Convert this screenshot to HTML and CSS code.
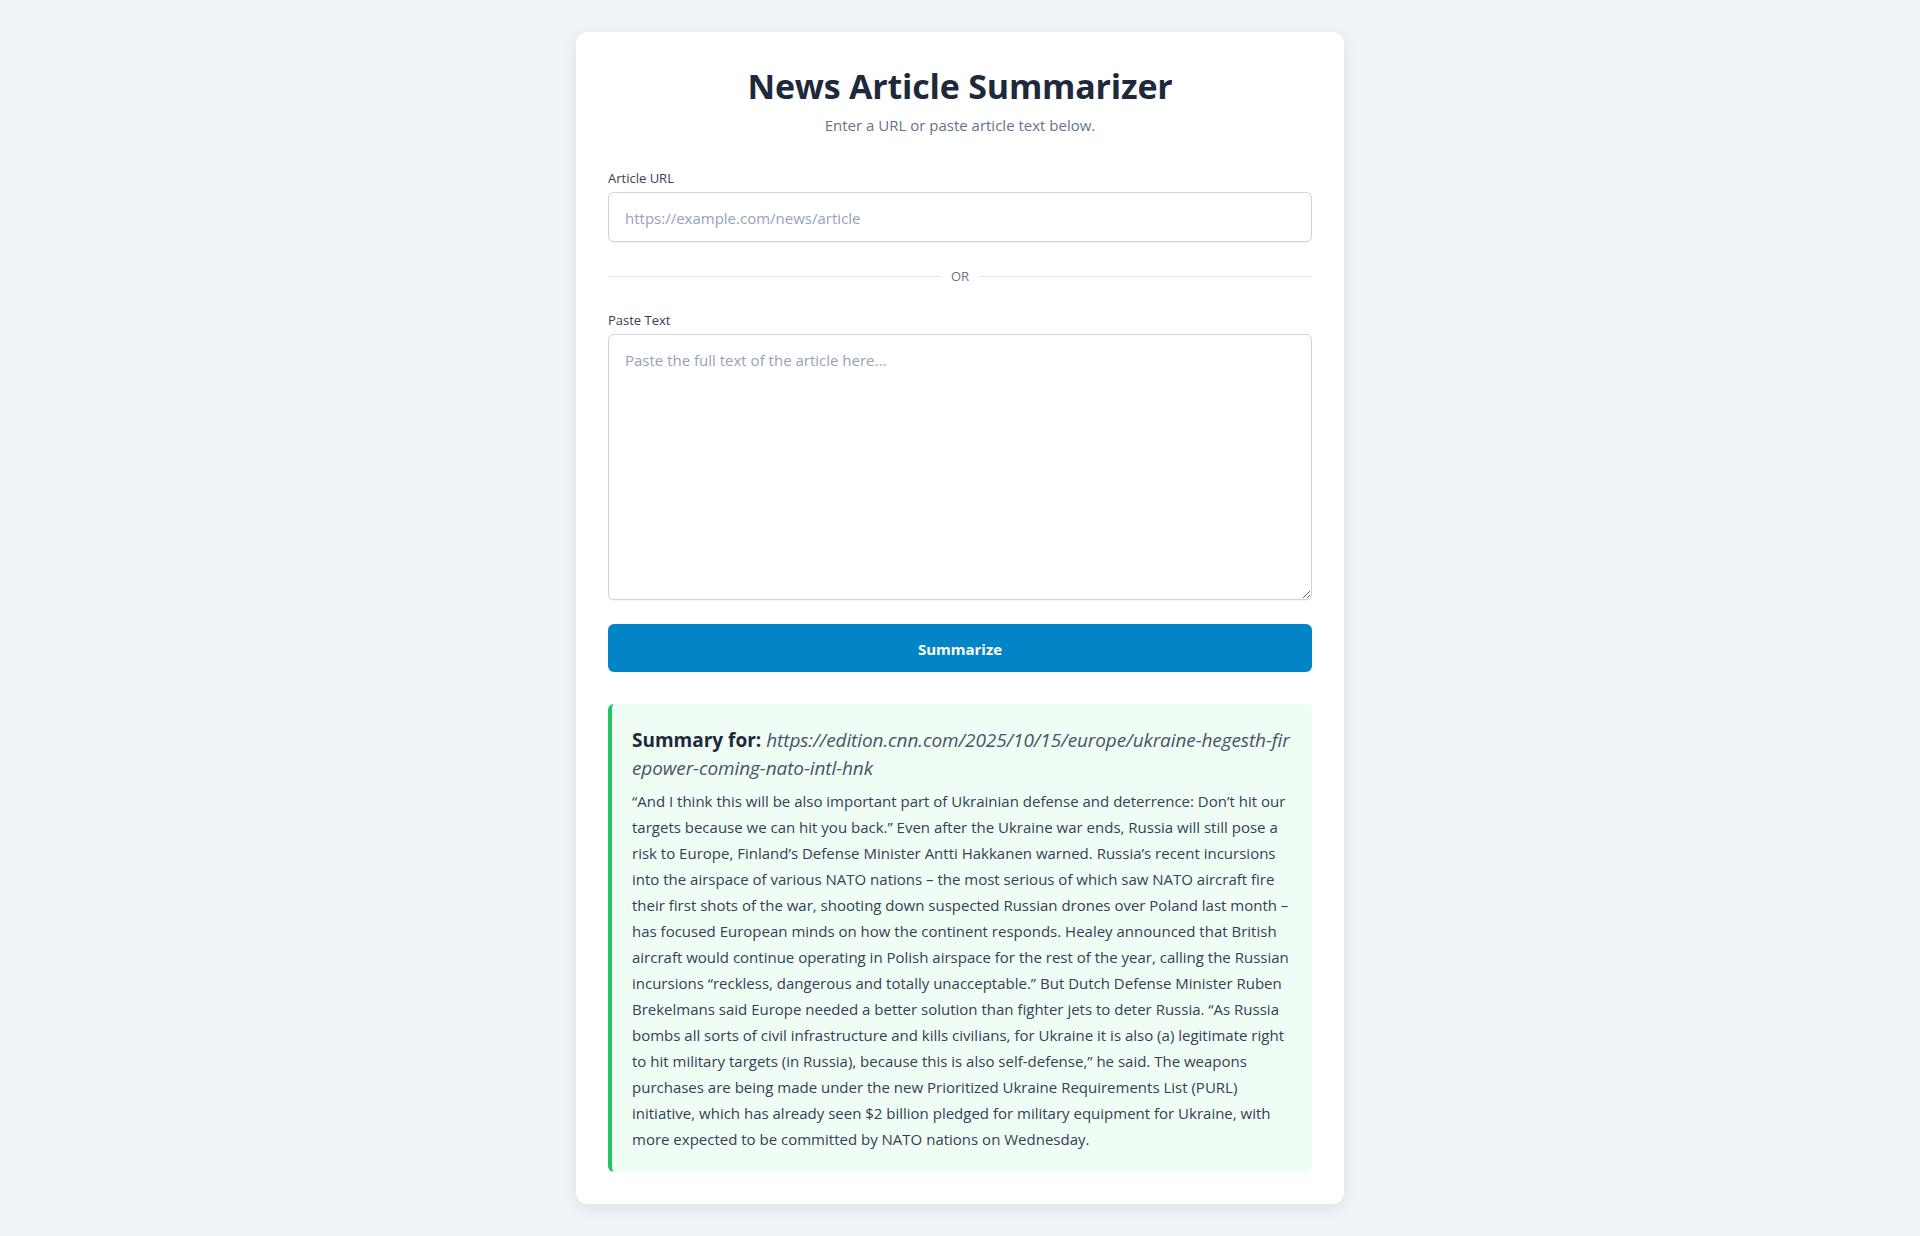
FILE: index.html
```html
<!DOCTYPE html>
<html lang="en">
<head>
    <meta charset="UTF-8">
    <meta name="viewport" content="width=device-width, initial-scale=1.0">
    <title>News Article Summarizer</title>
    <link rel="stylesheet" href="styles.css">
</head>
<body>

    <main class="card">
        <header class="header">
            <h1>News Article Summarizer</h1>
            <p class="subtitle">Enter a URL or paste article text below.</p>
        </header>

        <form class="form">
            <div class="field">
                <label for="article-url">Article URL</label>
                <input id="article-url" type="url" placeholder="https://example.com/news/article">
            </div>

            <div class="divider"><span>OR</span></div>

            <div class="field">
                <label for="article-text">Paste Text</label>
                <textarea id="article-text" placeholder="Paste the full text of the article here..."></textarea>
            </div>

            <button type="button" class="btn">Summarize</button>
        </form>

        <section class="summary">
            <h2>Summary for: <span class="summary-url">https://edition.cnn.com/2025/10/15/europe/ukraine-hegesth-firepower-coming-nato-intl-hnk</span></h2>
            <p>“And I think this will be also important part of Ukrainian defense and deterrence: Don’t hit our targets because we can hit you back.” Even after the Ukraine war ends, Russia will still pose a risk to Europe, Finland’s Defense Minister Antti Hakkanen warned. Russia’s recent incursions into the airspace of various NATO nations – the most serious of which saw NATO aircraft fire their first shots of the war, shooting down suspected Russian drones over Poland last month – has focused European minds on how the continent responds. Healey announced that British aircraft would continue operating in Polish airspace for the rest of the year, calling the Russian incursions “reckless, dangerous and totally unacceptable.” But Dutch Defense Minister Ruben Brekelmans said Europe needed a better solution than fighter jets to deter Russia. “As Russia bombs all sorts of civil infrastructure and kills civilians, for Ukraine it is also (a) legitimate right to hit military targets (in Russia), because this is also self-defense,” he said. The weapons purchases are being made under the new Prioritized Ukraine Requirements List (PURL) initiative, which has already seen $2 billion pledged for military equipment for Ukraine, with more expected to be committed by NATO nations on Wednesday.</p>
        </section>
    </main>

</body>
</html>
```

FILE: styles.css
```css
* {
    box-sizing: border-box;
}

body {
    font-family: 'Open Sans', 'Liberation Sans', Arial, sans-serif;
    background-color: #f0f4f8;
    color: #334155;
    margin: 0;
    padding: 32px 16px;
}

.card {
    width: 768px;
    margin: 0 auto;
    background-color: #ffffff;
    border-radius: 12px;
    padding: 32px;
    box-shadow: 0 4px 16px rgba(15, 23, 42, 0.08);
}

.header {
    text-align: center;
    margin-bottom: 31px;
}

h1 {
    color: #1e293b;
    font-size: 34px;
    line-height: 44px;
    font-weight: 700;
    margin: 0 0 5px;
    letter-spacing: -0.2px;
}

.subtitle {
    color: #64748b;
    font-size: 15px;
    line-height: 24px;
    margin: 0;
}

.field label {
    display: block;
    font-size: 13px;
    line-height: 20px;
    color: #334155;
    margin-bottom: 4px;
}

.field input,
.field textarea {
    display: block;
    width: 100%;
    font-family: inherit;
    font-size: 15px;
    line-height: 24px;
    color: #1e293b;
    padding: 13px 16px 11px;
    border: 1px solid #cbd5e1;
    border-radius: 6px;
    background-color: #ffffff;
    outline: none;
    box-shadow: 0 1px 2px rgba(15, 23, 42, 0.05);
}

.field input::placeholder,
.field textarea::placeholder {
    color: #94a3b8;
}

.field textarea {
    height: 266px;
    resize: vertical;
}

.divider {
    display: flex;
    align-items: center;
    margin: 24px 0;
    font-size: 13px;
    line-height: 20px;
    color: #64748b;
}

.divider::before,
.divider::after {
    content: "";
    flex: 1;
    border-top: 1px solid #e2e8f0;
}

.divider span {
    padding: 0 10px;
}

.btn {
    display: block;
    width: 100%;
    margin-top: 24px;
    height: 48px;
    padding: 2px 0 0;
    border: none;
    border-radius: 6px;
    background-color: #0284c7;
    color: #ffffff;
    font-family: inherit;
    font-size: 15px;
    font-weight: 700;
    cursor: pointer;
}

.summary {
    margin-top: 32px;
    background-color: #f0fdf4;
    border-left: 4px solid #22c55e;
    border-radius: 6px;
    padding: 20px;
}

.summary h2 {
    font-size: 19px;
    line-height: 28px;
    font-weight: 700;
    color: #1e293b;
    margin: 0 0 6px;
    padding-top: 2px;
    word-break: break-all;
}

.summary-url {
    font-weight: 400;
    font-style: italic;
    color: #475569;
    letter-spacing: -0.1px;
}

.summary p {
    margin: 0;
    font-size: 15px;
    line-height: 26px;
    color: #334155;
}
```
